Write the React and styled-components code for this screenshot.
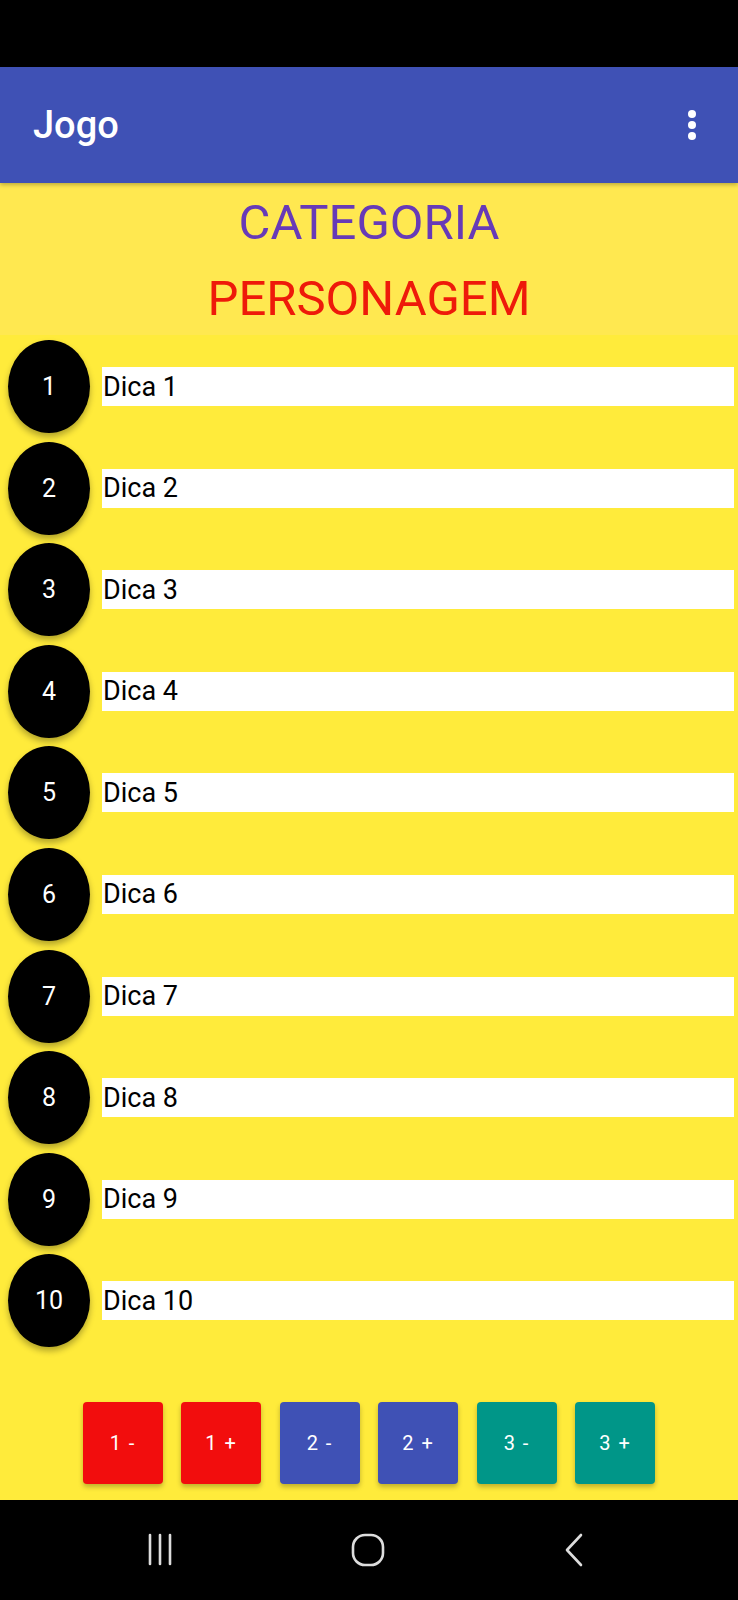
import React from "react";
import styled, { createGlobalStyle } from "styled-components";

const GlobalStyle = createGlobalStyle`
  html, body {
    margin: 0;
    padding: 0;
    background: #000;
  }
  body {
    font-family: Roboto, "Noto Sans", sans-serif;
  }
  *, *::before, *::after {
    box-sizing: border-box;
  }
`;

const Screen = styled.div`
  width: 738px;
  height: 1600px;
  display: flex;
  flex-direction: column;
  background: #ffeb3b;
  overflow: hidden;
`;

const StatusBar = styled.div`
  height: 67px;
  background: #000;
  flex-shrink: 0;
`;

const AppBar = styled.header`
  height: 116px;
  flex-shrink: 0;
  background: #3f51b5;
  display: flex;
  align-items: center;
  justify-content: space-between;
  padding: 0 42px 0 33px;
  box-shadow: 0 2px 4px rgba(0, 0, 0, 0.25);
  position: relative;
  z-index: 2;
`;

const Title = styled.h1`
  margin: 0;
  color: #fff;
  font-size: 38px;
  font-weight: 500;
`;

const MenuDots = styled.div`
  display: flex;
  flex-direction: column;
  gap: 3px;

  span {
    width: 8px;
    height: 8px;
    border-radius: 50%;
    background: #fff;
  }
`;

const Header = styled.div`
  height: 152px;
  flex-shrink: 0;
  background: #ffe850;
  display: flex;
  flex-direction: column;
  align-items: center;
  justify-content: center;
  gap: 27px;
  padding-top: 2px;
`;

const HeaderText = styled.div`
  font-size: 49px;
  line-height: 1;
  color: ${(p) => p.color};
`;

const List = styled.div`
  display: flex;
  flex-direction: column;
  gap: 8.6px;
  padding-top: 5px;
`;

const Row = styled.div`
  display: flex;
  align-items: center;
  height: 93px;
  padding: 0 4px 0 8px;
`;

const Bubble = styled.div`
  width: 82px;
  height: 93px;
  flex-shrink: 0;
  border-radius: 50%;
  background: #000;
  color: #fff;
  display: flex;
  align-items: center;
  justify-content: center;
  font-size: 25px;
  box-shadow: 0 4px 6px rgba(0, 0, 0, 0.3);
`;

const Hint = styled.div`
  flex: 1;
  margin-left: 12px;
  height: 39px;
  background: #fff;
  display: flex;
  align-items: center;
  font-size: 27px;
  color: #000;
  padding-left: 1px;
`;

const ButtonBar = styled.div`
  margin-top: auto;
  display: flex;
  justify-content: center;
  gap: 18.5px;
  padding-bottom: 16px;
`;

const ScoreButton = styled.button`
  width: 80px;
  height: 82px;
  border: none;
  border-radius: 4px;
  background: ${(p) => p.bg};
  color: #fff;
  font-family: Roboto, sans-serif;
  font-size: 20px;
  letter-spacing: 1.5px;
  box-shadow: 0 3px 5px rgba(0, 0, 0, 0.25);
`;

const NavBar = styled.nav`
  height: 100px;
  flex-shrink: 0;
  background: #000;
  display: grid;
  grid-template-columns: repeat(3, 207px);
  align-items: center;
  justify-items: center;
  padding-left: 57px;
`;

const hints = Array.from({ length: 10 }, (_, i) => i + 1);

const buttons = [
  { label: "1 -", bg: "#f20d0d" },
  { label: "1 +", bg: "#f20d0d" },
  { label: "2 -", bg: "#3f51b5" },
  { label: "2 +", bg: "#3f51b5" },
  { label: "3 -", bg: "#009688" },
  { label: "3 +", bg: "#009688" },
];

const App = () => {
  return (
    <Screen>
      <GlobalStyle />
      <StatusBar />
      <AppBar>
        <Title>Jogo</Title>
        <MenuDots>
          <span />
          <span />
          <span />
        </MenuDots>
      </AppBar>
      <Header>
        <HeaderText color="#673ab7">CATEGORIA</HeaderText>
        <HeaderText color="#ee1a0a">PERSONAGEM</HeaderText>
      </Header>
      <List>
        {hints.map((n) => (
          <Row key={n}>
            <Bubble>{n}</Bubble>
            <Hint>Dica {n}</Hint>
          </Row>
        ))}
      </List>
      <ButtonBar>
        {buttons.map((b) => (
          <ScoreButton key={b.label} bg={b.bg}>
            {b.label}
          </ScoreButton>
        ))}
      </ButtonBar>
      <NavBar>
        <svg width="34" height="34" viewBox="0 0 34 34">
          <g stroke="#ddd" strokeWidth="2.6" strokeLinecap="round">
            <line x1="6" y1="2" x2="6" y2="31" />
            <line x1="16" y1="2" x2="16" y2="31" />
            <line x1="26" y1="2" x2="26" y2="31" />
          </g>
        </svg>
        <svg width="36" height="36" viewBox="0 0 36 36">
          <rect x="3" y="3" width="30" height="30" rx="12" fill="none" stroke="#ddd" strokeWidth="2.6" />
        </svg>
        <svg width="24" height="36" viewBox="0 0 24 36">
          <polyline points="18,3 4,18 18,33" fill="none" stroke="#ddd" strokeWidth="2.6" strokeLinecap="round" strokeLinejoin="round" />
        </svg>
      </NavBar>
    </Screen>
  );
};

export default App;
